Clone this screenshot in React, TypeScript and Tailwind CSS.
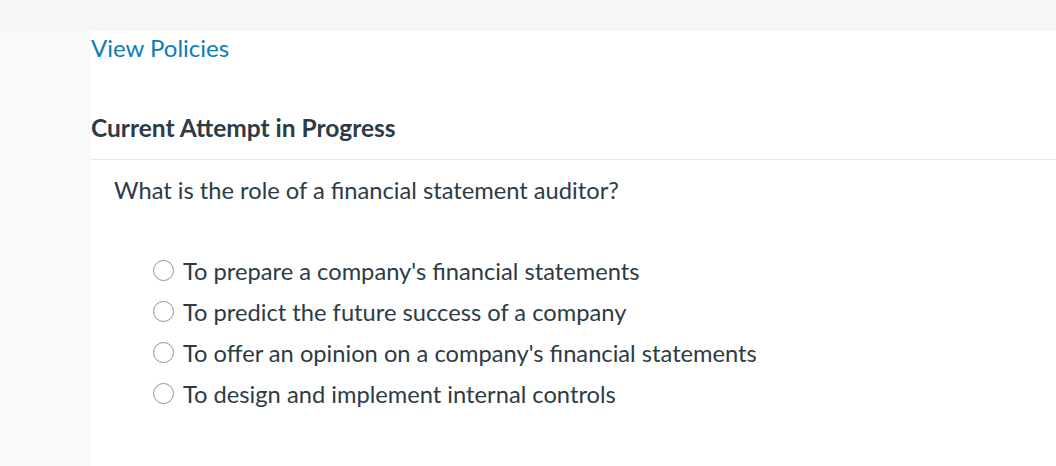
const options = [
    "To prepare a company's financial statements",
    "To predict the future success of a company",
    "To offer an opinion on a company's financial statements",
    "To design and implement internal controls",
];

export default function App() {
    return (
        <div className="min-h-screen bg-[#f9f9f9] font-['Lato',sans-serif] text-[#2d3b45]">
            {/* Top strip */}
            <div className="h-[31px] bg-[#f6f6f6]" />

            <div className="flex">
                <div className="w-[91px] shrink-0 bg-[#f9f9f9]" />

                <main className="flex-1 bg-white min-h-[435px]">
                    <a href="#" className="block mt-[3px] text-[24px] leading-[28px] text-[#0b7cb5] w-fit">
                        View Policies
                    </a>

                    {/* Header */}
                    <div className="mt-[52px] pb-[17px] border-b border-[#e8e8e8]">
                        <h2 className="text-[24.5px] leading-[28px] font-bold">
                            Current Attempt in Progress
                        </h2>
                    </div>

                    {/* Question */}
                    <div className="pl-[23px]">
                        <p className="mt-[16px] text-[23.7px] leading-[28px]">
                            What is the role of a financial statement auditor?
                        </p>

                        <ul className="mt-[46px] pl-[39px]">
                            {options.map((opt) => (
                                <li key={opt} className="h-[41px] flex items-center">
                                    <label className="flex items-center gap-[9px] cursor-pointer">
                                        <input
                                            type="radio"
                                            name="answer"
                                            className="appearance-none w-[21px] h-[21px] rounded-full border border-[#8e8e98] bg-white"
                                        />
                                        <span className="text-[23.7px] leading-[28px]">{opt}</span>
                                    </label>
                                </li>
                            ))}
                        </ul>
                    </div>
                </main>
            </div>
        </div>
    );
}
